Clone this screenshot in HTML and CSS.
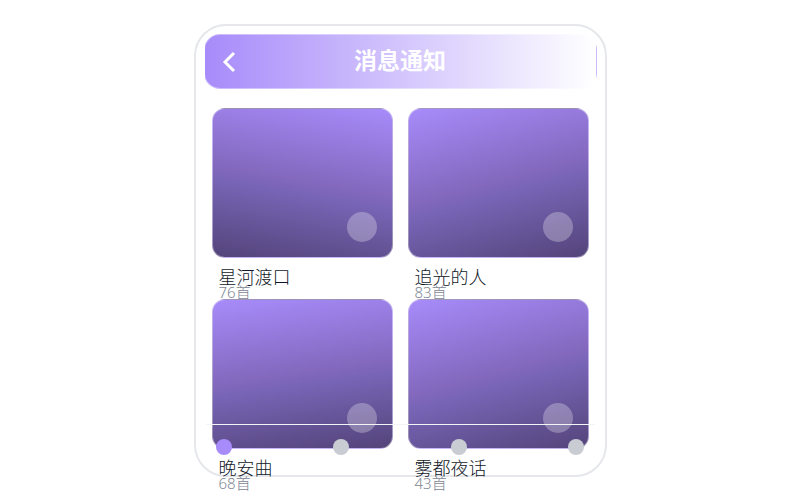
FILE: index.html
```html
<!DOCTYPE html>
<html lang="zh-CN">
<head>
<meta charset="utf-8">
<title>消息通知</title>
<link rel="stylesheet" href="styles.css">
</head>
<body>
<main class="phone">
  <header class="header">
    <button class="back" type="button" aria-label="返回"><svg viewBox="0 0 28 28" width="28" height="28"><path d="M18 5 9 14l9 9" fill="none" stroke="#fff" stroke-width="3"/></svg></button>
    <h1 class="title">消息通知</h1>
  </header>
  <section class="grid">
    <article class="item"><div class="cover tilt-left"><span class="play"></span></div><h2 class="name">星河渡口</h2><p class="count">76首</p></article>
    <article class="item"><div class="cover tilt-right"><span class="play"></span></div><h2 class="name">追光的人</h2><p class="count">83首</p></article>
    <article class="item"><div class="cover tilt-slight"><span class="play"></span></div><h2 class="name">晚安曲</h2><p class="count">68首</p></article>
    <article class="item"><div class="cover tilt-right"><span class="play"></span></div><h2 class="name">雾都夜话</h2><p class="count">43首</p></article>
  </section>
  <nav class="tabs" aria-label="标签">
    <button class="dot active" type="button" aria-label="一"></button>
    <button class="dot" type="button" aria-label="二"></button>
    <button class="dot" type="button" aria-label="三"></button>
    <button class="dot" type="button" aria-label="四"></button>
  </nav>
</main>
</body>
</html>
```

FILE: styles.css
```css
* { box-sizing: border-box; }
html { height: 100%; }
body {
  margin: 0;
  height: 100%;
  padding: 24px 16px;
  overflow: hidden;
  background: #fff;
  font-family: "Noto Sans", "Noto Sans CJK SC", sans-serif;
}
.phone {
  position: relative;
  max-width: 413px;
  height: 453px;
  margin: 0 auto;
  padding: 8px;
  border: 2px solid #e5e7eb;
  border-radius: 32px;
  background: #fff;
}
.header {
  display: flex;
  align-items: center;
  height: 55px;
  padding: 0 11px;
  border: 1px solid rgba(255, 255, 255, .4);
  border-radius: 16px;
  background: linear-gradient(90deg, #a78bfa, #fff);
}
.back {
  display: flex;
  width: 28px;
  padding: 0;
  border: 0;
  background: none;
}
.title {
  flex: 1;
  margin: 0 28px 0 0;
  padding-bottom: 4px;
  color: #fff;
  font-size: 23px;
  line-height: 32px;
  font-weight: 700;
  text-align: center;
}
.grid {
  display: grid;
  grid-template-columns: 1fr 1fr;
  column-gap: 15px;
  padding: 19px 8px 0;
}
.item { height: 191px; }
.cover {
  display: flex;
  align-items: flex-end;
  justify-content: flex-end;
  height: 150px;
  padding: 15px;
  border: 1px solid rgba(255, 255, 255, .4);
  border-radius: 13px;
}
.tilt-left { background: linear-gradient(190deg, #a78bfa, #8469bf 48%, #7764b5 57%, #54447a); }
.tilt-right { background: linear-gradient(165deg, #a78bfa, #8469bf 48%, #7764b5 57%, #54447a); }
.tilt-slight { background: linear-gradient(172deg, #a78bfa, #8469bf 48%, #7764b5 57%, #54447a); }
.play {
  width: 30px;
  height: 30px;
  border-radius: 50%;
  background: rgba(255, 255, 255, .28);
}
.name, .count {
  margin: 0;
  padding-left: 7px;
  font-weight: 300;
}
.name {
  padding-top: 9px;
  color: #111827;
  font-size: 18px;
  line-height: 20px;
}
.count {
  color: #7d8592;
  font-size: 15px;
  line-height: 10px;
}
.tabs {
  position: absolute;
  left: 10px;
  right: 10px;
  bottom: 8px;
  display: flex;
  justify-content: space-between;
  height: 43px;
  padding: 14px 10px 0;
  border-top: 1px solid #f3f4f6;
}
.dot {
  width: 16px;
  height: 16px;
  padding: 0;
  border: 0;
  border-radius: 50%;
  background: #c9ccd3;
}
.active { background: #a78bfa; }
```
